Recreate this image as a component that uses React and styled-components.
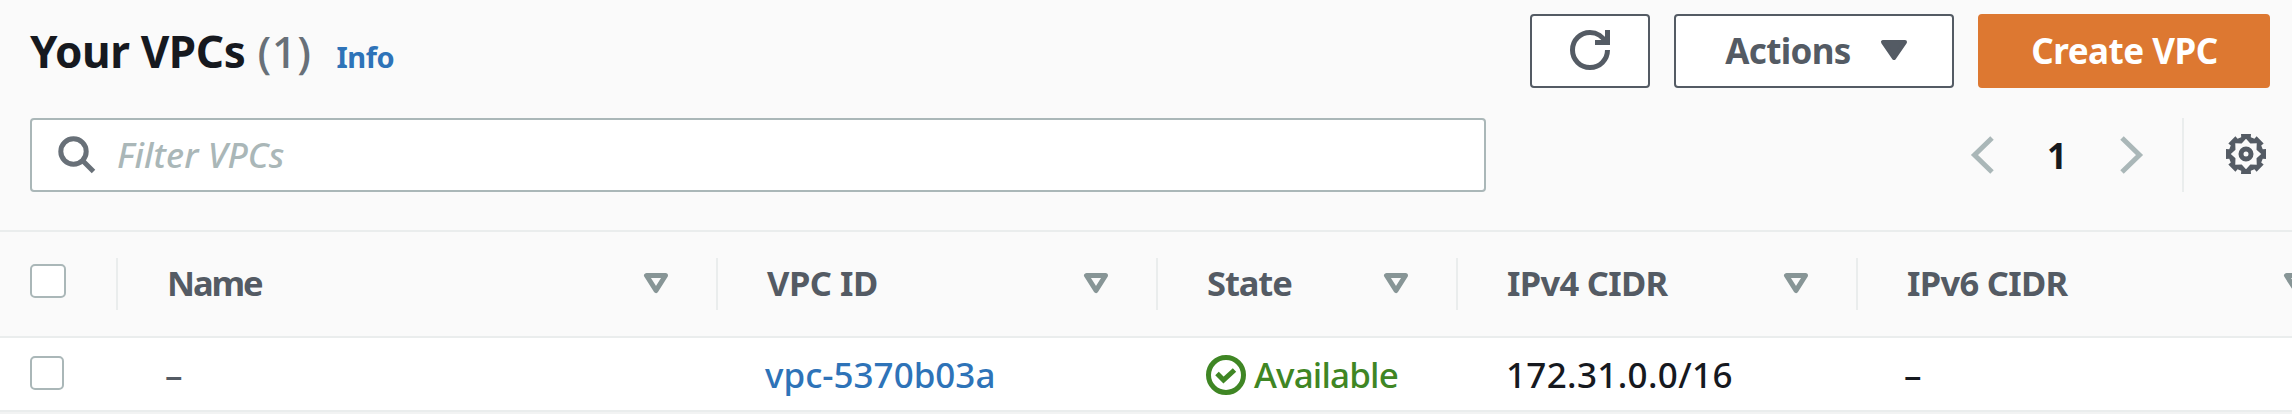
import React from 'react';
import styled, { createGlobalStyle } from 'styled-components';

const Global = createGlobalStyle`
  * { box-sizing: border-box; }
  body { margin: 0; background: #f2f3f3; overflow: hidden; }
`;

const Page = styled.main`
  width: 2292px;
  height: 414px;
  overflow: hidden;
  background: #f2f3f3;
  color: #16191f;
  font: 500 35px/44px 'Noto Sans', 'Open Sans', sans-serif;
  white-space: nowrap;
`;

const Header = styled.header`
  height: 230px;
  padding: 14px 22px 0 30px;
  background: #fafafa;
`;

const TitleRow = styled.div`
  display: flex;
  align-items: center;
  justify-content: space-between;
  height: 74px;
`;

const Heading = styled.div`
  display: flex;
  align-items: baseline;
  padding-top: 6px;
`;

const Title = styled.h1`
  margin: 0;
  font-size: 44px;
  font-weight: 700;
  letter-spacing: -0.38px;
`;

const Count = styled.span`
  margin-left: 12px;
  font-size: 44px;
  font-weight: 500;
  letter-spacing: 0.5px;
  color: #687078;
`;

const InfoLink = styled.a`
  margin-left: 25px;
  font-size: 29px;
  font-weight: 700;
  letter-spacing: -0.5px;
  color: #2e73b8;
`;

const Actions = styled.div`
  display: flex;
  gap: 24px;
`;

const Button = styled.button`
  display: flex;
  align-items: center;
  justify-content: center;
  gap: ${(p) => p.$gap || 0}px;
  width: ${(p) => p.$width}px;
  height: 74px;
  padding: 0 0 0 ${(p) => p.$inset || 0}px;
  border: 2px solid ${(p) => (p.$primary ? '#dd7831' : '#545b64')};
  border-radius: 4px;
  background: ${(p) => (p.$primary ? '#dd7831' : '#fff')};
  color: ${(p) => (p.$primary ? '#fff' : '#545b64')};
  font: 700 35px/44px 'Noto Sans', 'Open Sans', sans-serif;
  letter-spacing: ${(p) => p.$tracking || 0}px;

  svg { margin-top: -2px; }
`;

const FilterRow = styled.div`
  display: flex;
  justify-content: space-between;
  margin-top: 30px;
`;

const SearchBox = styled.label`
  display: flex;
  align-items: center;
  gap: 20px;
  width: 1456px;
  height: 74px;
  padding: 0 25px;
  border: 2px solid #aab7b8;
  border-radius: 4px;
  background: #fff;
`;

const Placeholder = styled.span`
  font-style: italic;
  letter-spacing: 0.1px;
  color: #aab7b8;
`;

const Pager = styled.nav`
  display: flex;
  align-items: center;
  height: 74px;
`;

const PageNumber = styled.span`
  width: 126px;
  padding-top: 1px;
  text-align: center;
  font-weight: 700;
`;

const Preferences = styled.div`
  display: flex;
  align-items: center;
  justify-content: flex-end;
  width: 88px;
  height: 74px;
  margin-left: 39px;
  padding: 0 4px 2px 0;
  border-left: 2px solid #eaeded;
`;

const Icon = styled.svg`
  display: block;
  flex: none;
  fill: none;
  overflow: visible;
`;

const Row = styled.div`
  display: grid;
  grid-template-columns: 118px 600px 440px 300px 400px 500px;
  align-items: center;
  height: ${(p) => (p.$head ? 108 : 74)}px;
  border-top: ${(p) => (p.$head ? '2px solid #eaeded' : '0')};
  border-bottom: 2px solid #eaeded;
  background: ${(p) => (p.$head ? '#fafafa' : '#fff')};
`;

const HeadCell = styled.div`
  display: flex;
  align-items: center;
  justify-content: space-between;
  height: 52px;
  padding: 0 ${(p) => (p.$check ? 0 : 48)}px 2px ${(p) => (p.$check ? 30 : 49)}px;
  border-right: 2px solid #eaeded;
  color: #545b64;
  font-size: 34.5px;
  font-weight: 700;
  letter-spacing: ${(p) => p.$tracking || 0}px;
`;

const Cell = styled.div`
  display: flex;
  align-items: center;
  gap: ${(p) => p.$gap || 0}px;
  padding: 2px 0 0 ${(p) => p.$left}px;
  color: ${(p) => p.$color || '#16191f'};
  letter-spacing: ${(p) => p.$tracking || 0}px;
`;

const Checkbox = styled.span`
  width: ${(p) => p.$width}px;
  height: 34px;
  margin-top: -4px;
  border: 2px solid #aab7b8;
  border-radius: 5px;
  background: #fff;
`;

const SortIcon = () => (
  <Icon width="24" height="20" viewBox="0 0 24 20">
    <path d="M2.5 2.5h19L12 17.5z" stroke="#879596" strokeWidth="5" strokeLinejoin="round" />
  </Icon>
);

const Chevron = ({ right }) => (
  <Icon width="23" height="38" viewBox="0 0 23 38">
    <path d={right ? 'M2 2l17.5 17L2 36' : 'M21 2L3.5 19 21 36'} stroke="#aab7b8" strokeWidth="5" />
  </Icon>
);

const polar = (r, deg) => {
  const a = (deg * Math.PI) / 180;
  return `${(20 + r * Math.cos(a)).toFixed(2)} ${(20 + r * Math.sin(a)).toFixed(2)}`;
};

const teeth = [0, 45, 90, 135, 180, 225, 270, 315];
const gearRim = `M${teeth
  .flatMap((t) => [polar(17.4, t - 16), polar(20.6, t - 14), polar(20.6, t + 14), polar(17.4, t + 16)])
  .join('L')}z`;
const gearHole = `M${teeth.flatMap((t) => [polar(15.2, t), polar(11.4, t + 22.5)]).join('L')}z`;

const GearIcon = () => (
  <Icon width="40" height="40" viewBox="0 0 40 40">
    <path d={`${gearRim}${gearHole}`} fill="#545b64" fillRule="evenodd" />
    <circle cx="20" cy="20" r="5" stroke="#545b64" strokeWidth="5" />
  </Icon>
);

const columns = [
  { label: 'Name', tracking: -2.1 },
  { label: 'VPC ID', tracking: -0.5 },
  { label: 'State', tracking: -1.1 },
  { label: 'IPv4 CIDR', tracking: -0.7 },
  { label: 'IPv6 CIDR', tracking: -0.7 },
];

export default function App() {
  return (
    <Page>
      <Global />
      <Header>
        <TitleRow>
          <Heading>
            <Title>Your VPCs</Title>
            <Count>(1)</Count>
            <InfoLink>Info</InfoLink>
          </Heading>
          <Actions>
            <Button $width={120} aria-label="Refresh">
              <Icon width="40" height="40" viewBox="0 0 16 16" stroke="#545b64" strokeWidth="2">
                <path d="M10 5h5V0M15 8c0 3.9-3.1 7-7 7s-7-3.1-7-7 3.1-7 7-7c2.8 0 5.2 1.6 6.3 4" />
              </Icon>
            </Button>
            <Button $width={280} $gap={30} $inset={4} $tracking={-0.65}>
              Actions
              <Icon width="26" height="20" viewBox="0 0 26 20">
                <path d="M2 2h22L13 18z" fill="#545b64" stroke="#545b64" strokeWidth="4" strokeLinejoin="round" />
              </Icon>
            </Button>
            <Button $width={292} $primary $inset={1} $tracking={-0.5}>Create VPC</Button>
          </Actions>
        </TitleRow>
        <FilterRow>
          <SearchBox>
            <Icon width="40" height="40" viewBox="0 0 40 40" stroke="#687078" strokeWidth="5">
              <circle cx="16.5" cy="16.5" r="12.7" />
              <path d="M25.5 25.5l11 11" />
            </Icon>
            <Placeholder>Filter VPCs</Placeholder>
          </SearchBox>
          <Pager>
            <Chevron />
            <PageNumber>1</PageNumber>
            <Chevron right />
            <Preferences>
              <GearIcon />
            </Preferences>
          </Pager>
        </FilterRow>
      </Header>
      <Row $head>
        <HeadCell $check>
          <Checkbox $width={36} />
        </HeadCell>
        {columns.map((c) => (
          <HeadCell key={c.label} $tracking={c.tracking}>
            {c.label}
            <SortIcon />
          </HeadCell>
        ))}
      </Row>
      <Row>
        <Cell $left={30}>
          <Checkbox $width={34} />
        </Cell>
        <Cell $left={47} $color="#545b64">–</Cell>
        <Cell $left={47} $color="#2e73b8">vpc-5370b03a</Cell>
        <Cell $left={48} $gap={8} $color="#3f8624" $tracking={-0.85}>
          <Icon width="40" height="40" viewBox="0 0 40 40" stroke="#3f8624" strokeWidth="5">
            <circle cx="20" cy="20" r="17.5" />
            <path d="M11 18.5l6.5 6.5L28.5 15" />
          </Icon>
          Available
        </Cell>
        <Cell $left={48} $tracking={0.35}>172.31.0.0/16</Cell>
        <Cell $left={46}>–</Cell>
      </Row>
    </Page>
  );
}
